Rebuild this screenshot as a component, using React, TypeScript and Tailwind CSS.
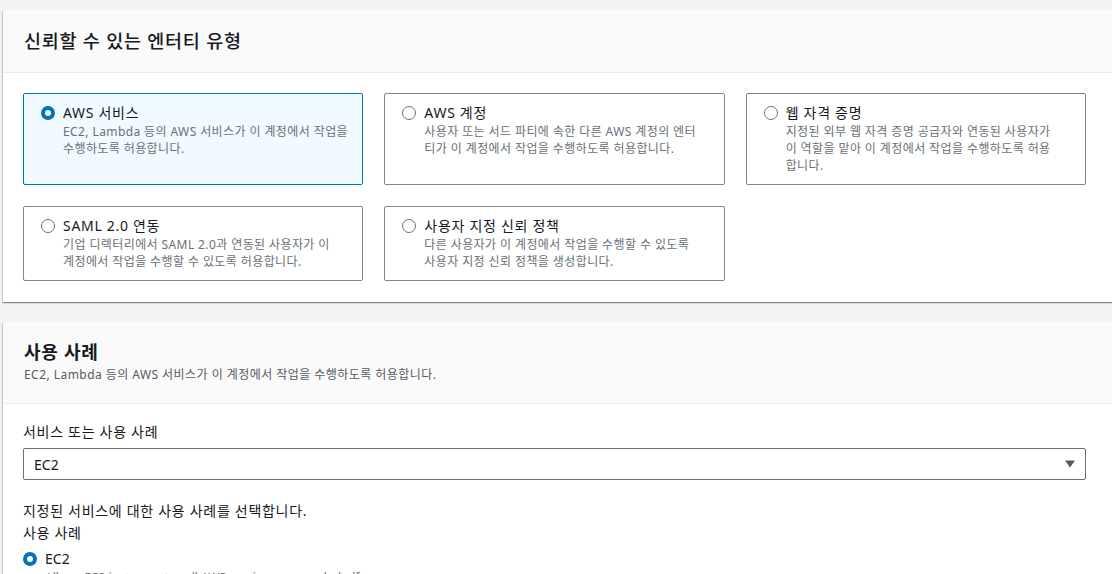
import React from "react";

const font = { fontFamily: '"Noto Sans", "Noto Sans CJK KR", sans-serif' };

function Radio({ checked }: { checked?: boolean }) {
  return checked ? (
    <span className="mt-[3px] box-border block h-[14px] w-[14px] shrink-0 rounded-full border-[4px] border-[#0073bb] bg-white" />
  ) : (
    <span className="mt-[3px] box-border block h-[14px] w-[14px] shrink-0 rounded-full border-[1.5px] border-[#687078] bg-white" />
  );
}

function Card({
  title,
  lines,
  checked,
}: {
  title: string;
  lines: string[];
  checked?: boolean;
}) {
  return (
    <div
      className={
        "flex gap-[8px] rounded-[2px] border pl-[17px] pr-[8px] pt-[9px] pb-[10px] " +
        (checked ? "border-[#0073bb] bg-[#f1faff]" : "border-[#7d8590] bg-white")
      }
    >
      <Radio checked={checked} />
      <div className="flex flex-col">
        <div className="text-[14px] leading-[20px] tracking-[0.7px] text-[#16191f]">{title}</div>
        {lines.map((l, i) => (
          <div key={i} className="whitespace-nowrap text-[12px] leading-[17px] tracking-[0.4px] text-[#687078]">
            {l}
          </div>
        ))}
      </div>
    </div>
  );
}

const panelShadow =
  "shadow-[0_1px_1px_0_rgba(0,28,36,0.3),1px_1px_1px_0_rgba(0,28,36,0.15),-1px_1px_1px_0_rgba(0,28,36,0.15)]";

export default function App() {
  return (
    <div className="h-[574px] w-[1112px] overflow-hidden bg-[#f2f3f3] pt-[10px]" style={font}>
      <div className={"ml-[3px] w-[1140px] bg-white " + panelShadow}>
        <div className="flex h-[63px] items-center border-b border-[#eaeded] bg-[#fafafa] pl-[21px]">
          <h2 className="text-[18.5px] font-medium tracking-[0.75px] text-[#16191f]">신뢰할 수 있는 엔터티 유형</h2>
        </div>
        <div className="pl-[20px] pt-[20px] pb-[21px]">
          <div className="grid w-[1063px] grid-cols-3 gap-[21px]">
            <Card
              checked
              title="AWS 서비스"
              lines={["EC2, Lambda 등의 AWS 서비스가 이 계정에서 작업을", "수행하도록 허용합니다."]}
            />
            <Card
              title="AWS 계정"
              lines={["사용자 또는 서드 파티에 속한 다른 AWS 계정의 엔터", "티가 이 계정에서 작업을 수행하도록 허용합니다."]}
            />
            <Card
              title="웹 자격 증명"
              lines={[
                "지정된 외부 웹 자격 증명 공급자와 연동된 사용자가",
                "이 역할을 맡아 이 계정에서 작업을 수행하도록 허용",
                "합니다.",
              ]}
            />
            <Card
              title="SAML 2.0 연동"
              lines={["기업 디렉터리에서 SAML 2.0과 연동된 사용자가 이", "계정에서 작업을 수행할 수 있도록 허용합니다."]}
            />
            <Card
              title="사용자 지정 신뢰 정책"
              lines={["다른 사용자가 이 계정에서 작업을 수행할 수 있도록", "사용자 지정 신뢰 정책을 생성합니다."]}
            />
          </div>
        </div>
      </div>

      <div className={"ml-[3px] mt-[20px] w-[1140px] bg-white " + panelShadow}>
        <div className="flex h-[82px] flex-col border-b border-[#eaeded] bg-[#fafafa] pl-[21px] pt-[16px]">
          <h2 className="text-[18px] font-bold leading-[28px] tracking-[0.7px] text-[#16191f]">사용 사례</h2>
          <p className="text-[12px] leading-[18px] tracking-[0.45px] text-[#545b64]">
            EC2, Lambda 등의 AWS 서비스가 이 계정에서 작업을 수행하도록 허용합니다.
          </p>
        </div>
        <div className="pl-[20px] pt-[17px]">
          <div className="w-[1063px]">
            <div className="text-[14px] leading-[22px] tracking-[0.7px] text-[#16191f]">서비스 또는 사용 사례</div>
            <div className="mt-[5px] flex h-[32px] items-center justify-between rounded-[2px] border border-[#687078] bg-white pl-[10px] pr-[9px]">
              <span className="text-[14px] text-[#16191f]">EC2</span>
              <svg width="12" height="10" viewBox="0 0 12 10">
                <path d="M1 1.5 L11 1.5 L6 8.5 Z" fill="#545b64" />
              </svg>
            </div>
            <div className="mt-[20px] text-[14px] leading-[22px] tracking-[0.7px] text-[#16191f]">
              지정된 서비스에 대한 사용 사례를 선택합니다.
            </div>
            <div className="text-[14px] leading-[22px] tracking-[0.7px] text-[#16191f]">사용 사례</div>
            <div className="mt-[5px] flex gap-[8px]">
              <Radio checked />
              <div className="flex flex-col">
                <div className="text-[14px] leading-[20px] text-[#16191f]">EC2</div>
                <div className="text-[12px] leading-[17px] text-[#687078]">
                  Allows EC2 instances to call AWS services on your behalf.
                </div>
              </div>
            </div>
          </div>
        </div>
      </div>
    </div>
  );
}
